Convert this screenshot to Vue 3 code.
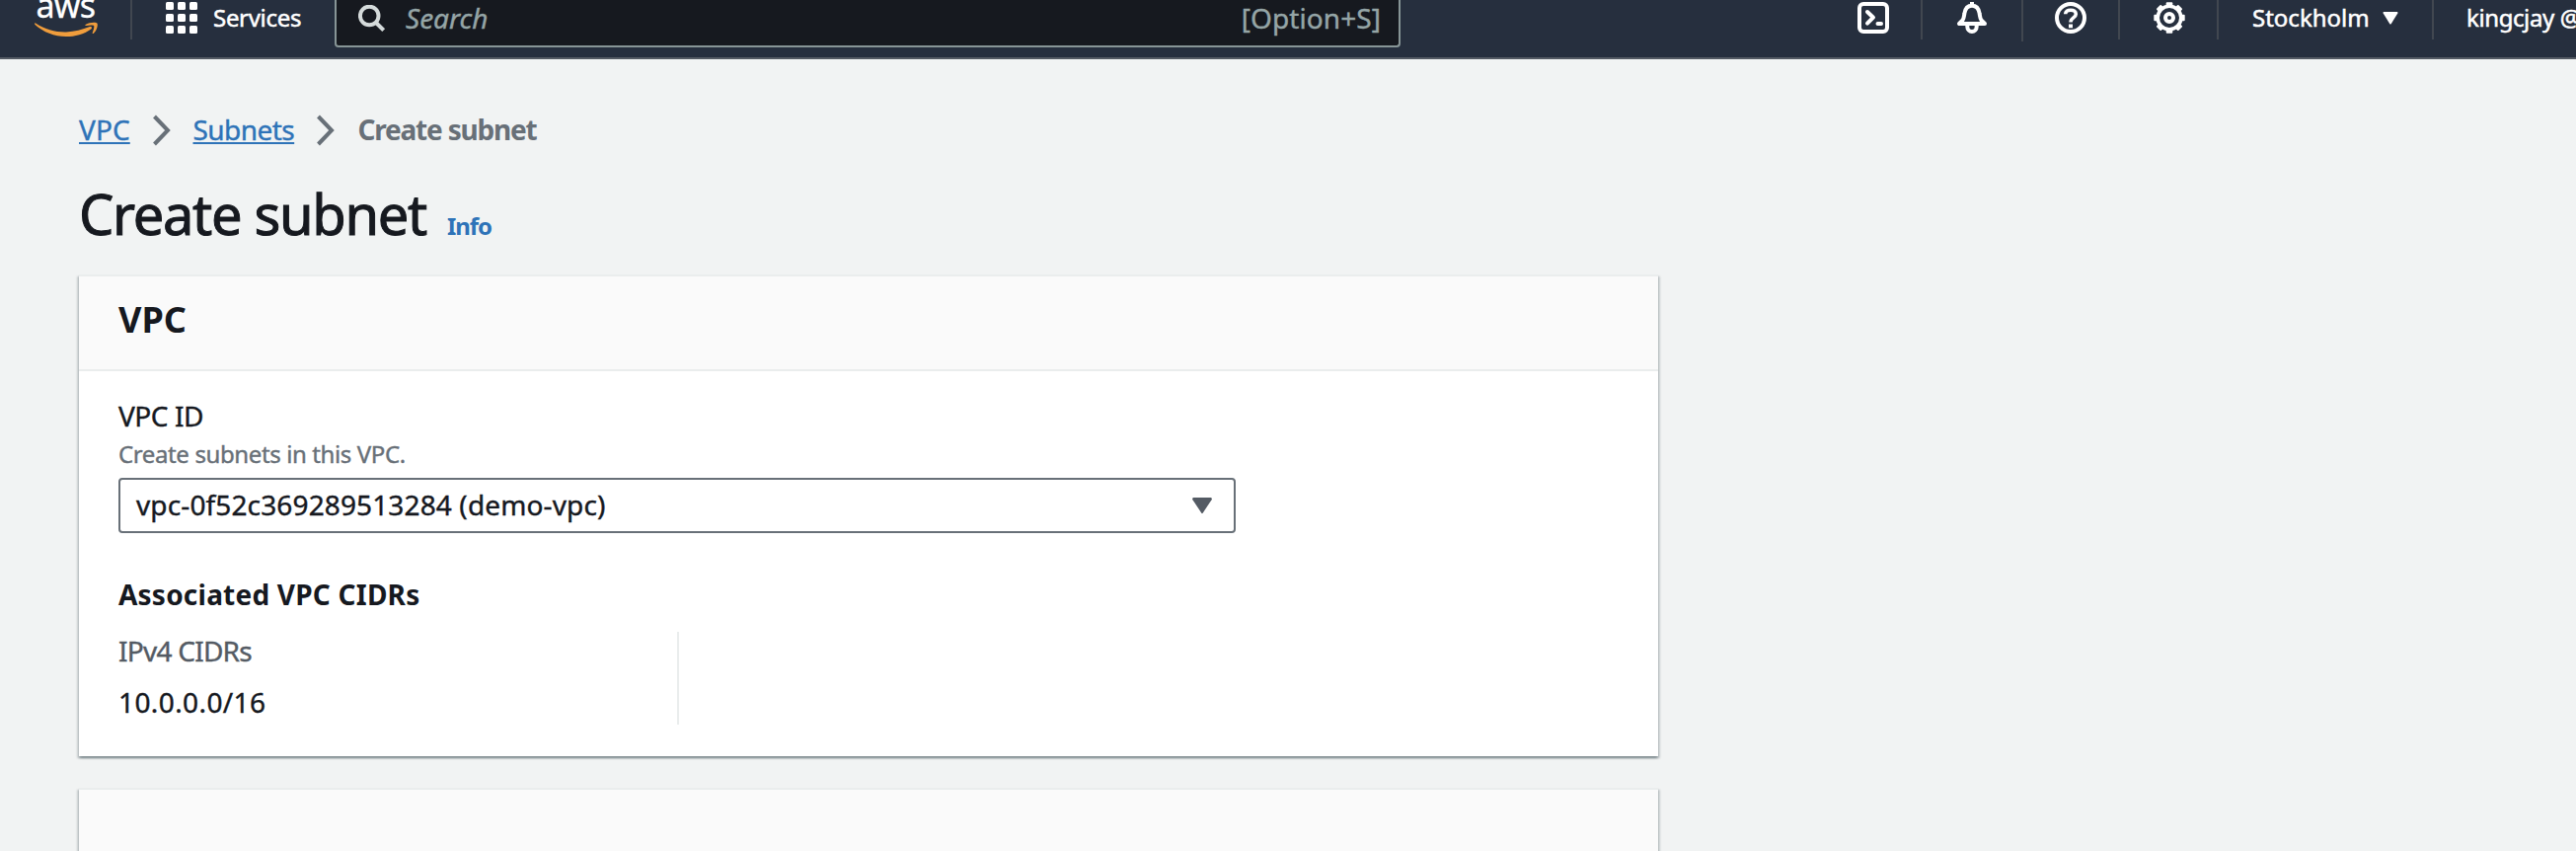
<script setup>
const crumbs = ['VPC', 'Subnets']
const gridCells = [0, 12, 24]
const teeth = [0, 45, 90, 135, 180, 225, 270, 315]
</script>

<template>
  <div class="page">
    <header class="topbar">
      <svg class="logo" width="96" height="40" viewBox="0 0 96 40">
        <text x="36.5" y="18" class="logo-text">aws</text>
        <path fill="#f09d3c" d="M36.1 23.5 C46 30 56 32.6 67 32.4 C76 32.2 83 30 91 27.1 C92.7 26.5 94 28.2 92.3 29.4 C85 34.6 76 37 67 37 C55 37 44 32.6 35.5 25 C34.7 24.1 35.2 23 36.1 23.5 Z" />
        <path fill="#f09d3c" d="M86.6 25.1 C90.5 22.3 97.5 22.2 98.4 23.5 C99.5 25.1 98.1 31 94.9 33.8 C94.2 34.4 93.4 34 93.7 33.2 C94.8 30.5 95.8 27 95.1 26 C94.3 25 90.5 25.4 87.2 25.9 C86.3 26 85.9 25.6 86.6 25.1 Z" />
      </svg>
      <i class="rule rule-logo"></i>
      <div class="services">
        <svg width="32" height="32" viewBox="0 0 32 32" fill="#fff">
          <template v-for="y in gridCells" :key="y">
            <rect v-for="x in gridCells" :key="x" :x="x" :y="y" width="8" height="8" rx="1.5" />
          </template>
        </svg>
        <span class="services-label">Services</span>
      </div>
      <div class="search">
        <svg width="28" height="28" viewBox="0 0 28 28" fill="none" stroke="#d5dbdb" stroke-width="4">
          <circle cx="11.2" cy="11" r="9.3" />
          <path d="M17.5 17.5 L25.7 25.7" />
        </svg>
        <span class="placeholder">Search</span>
        <span class="shortcut">[Option+S]</span>
      </div>
      <nav class="tools">
        <a class="tool tool-shell">
          <svg width="32" height="32" viewBox="0 0 32 32" fill="none" stroke="#fff" stroke-width="4" stroke-linecap="round">
            <rect x="2" y="2" width="28" height="28" rx="4" />
            <path d="M10 10 L16 15.7 L10 21.7" stroke-linejoin="round" />
            <path d="M20.5 22 H24" />
          </svg>
        </a>
        <i class="rule"></i>
        <a class="tool tool-bell">
          <svg width="32" height="32" viewBox="0 0 32 32" fill="none" stroke="#fff" stroke-width="4" stroke-linejoin="round">
            <path d="M16 0 V4" />
            <path d="M3 22 H29 L25.5 18.5 C24 16.5 24.2 14.5 23.6 11.5 C22.8 6.5 20 3.8 16 3.8 C12 3.8 9.2 6.5 8.4 11.5 C7.8 14.5 8 16.5 6.5 18.5 Z" />
            <path d="M11.3 22.5 V25 C11.3 28 13.5 30 16 30 C18.5 30 20.7 28 20.7 25 V22.5" />
          </svg>
        </a>
        <i class="rule rule-tall"></i>
        <a class="tool tool-help">
          <svg width="32" height="32" viewBox="0 0 32 32" fill="none" stroke="#fff" stroke-width="4">
            <circle cx="16" cy="16" r="14" />
            <path stroke-width="3.6" d="M10.7 12.3 C10.7 9.6 12.8 8.2 16 8.2 C19.2 8.2 21.3 9.8 21.3 12.2 C21.3 16.2 16 15.6 16 20.6" />
            <path d="M16 22.5 V26.3" />
          </svg>
        </a>
        <i class="rule"></i>
        <a class="tool tool-gear">
          <svg width="32" height="32" viewBox="0 0 32 32" fill="none" stroke="#fff" stroke-width="4">
            <circle cx="16" cy="16" r="11.8" stroke-width="3.6" />
            <rect v-for="a in teeth" :key="a" x="12.7" y="0.3" width="6.6" height="4" rx="1" fill="#fff" stroke="none" :transform="`rotate(${a} 16 16)`" />
            <circle cx="16" cy="16" r="4" />
          </svg>
        </a>
        <i class="rule"></i>
        <a class="region">
          <span>Stockholm</span>
          <svg width="16" height="13" viewBox="0 0 16 13"><path fill="#fff" d="M1.2 0 H14.8 Q16 0.3 15.3 1.5 L8.8 12 Q8 13 7.2 12 L0.7 1.5 Q0 0.3 1.2 0 Z" /></svg>
        </a>
        <i class="rule"></i>
        <a class="account">kingcjay @</a>
      </nav>
    </header>

    <main class="content">
      <nav class="crumbs">
        <template v-for="c in crumbs" :key="c">
          <a class="crumb" :class="{ short: c === 'VPC' }">{{ c }}</a>
          <svg class="chevron" width="18" height="32" viewBox="0 0 18 32" fill="none" stroke="#687078" stroke-width="4">
            <path d="M1.5 2 L15 16 L1.5 30" />
          </svg>
        </template>
        <span class="crumb-current">Create subnet</span>
      </nav>

      <div class="title">
        <h1>Create subnet</h1>
        <a class="info">Info</a>
      </div>

      <section class="card">
        <div class="card-head"><h2>VPC</h2></div>
        <div class="card-body">
          <div class="label">VPC ID</div>
          <div class="hint">Create subnets in this VPC.</div>
          <div class="select">
            <span>vpc-0f52c369289513284 (demo-vpc)</span>
            <svg width="20" height="16" viewBox="0 0 20 16"><path fill="#545b64" d="M1.2 0 H18.8 Q20.4 0.6 19.6 2.2 L10.8 15.4 Q10 16.4 9.2 15.4 L0.4 2.2 Q-0.4 0.6 1.2 0 Z" /></svg>
          </div>
          <h3>Associated VPC CIDRs</h3>
          <div class="column">
            <div class="key">IPv4 CIDRs</div>
            <div class="value">10.0.0.0/16</div>
          </div>
        </div>
      </section>

      <section class="card card-next">
        <div class="card-head"></div>
      </section>
    </main>
  </div>
</template>

<style>
body {
  background: #f1f3f3;
  overflow: hidden;
}
</style>

<style scoped>
.page {
  width: 2610px;
  height: 862px;
  overflow: hidden;
  background: #f1f3f3;
  color: #16191f;
  font-family: "Noto Sans", "Open Sans", sans-serif;
  font-size: 28px;
  line-height: 40px;
  white-space: nowrap;
}
h1, h2, h3 {
  margin: 0;
}
.topbar {
  display: flex;
  align-items: flex-start;
  height: 58px;
  background: #262f3e;
  border-bottom: 2px solid #545b64;
  color: #fff;
  font-size: 24px;
  line-height: 36px;
  overflow: hidden;
}
.topbar > *,
.tools > * {
  flex: none;
}
.logo {
  overflow: visible;
}
.logo-text {
  font-size: 34px;
  letter-spacing: -0.8px;
  fill: #fff;
  stroke: #fff;
  stroke-width: 0.3px;
}
.rule {
  width: 2px;
  height: 40px;
  background: #414750;
}
.rule-tall {
  height: 42px;
}
.rule-logo {
  margin-left: 36px;
}
.services {
  display: flex;
  align-items: center;
  width: 206px;
  height: 36px;
  padding-left: 34px;
  box-sizing: border-box;
}
.services-label {
  margin-left: 16px;
  letter-spacing: -0.3px;
  -webkit-text-stroke: 0.5px #fff;
}
.search {
  display: flex;
  box-sizing: border-box;
  width: 1080px;
  height: 48px;
  margin-left: -1px;
  padding: 0 18px 0 22px;
  background: #16191f;
  border: 2px solid #879596;
  border-top: 0;
  border-radius: 0 0 4px 4px;
  font-size: 28px;
  color: #95a5a6;
}
.search svg {
  margin-top: 5px;
}
.placeholder {
  margin-left: 20px;
  font-style: italic;
  -webkit-text-stroke: 0.4px #95a5a6;
}
.shortcut {
  margin-left: auto;
  letter-spacing: 0.08px;
  -webkit-text-stroke: 0.4px #95a5a6;
}
.tools {
  display: flex;
  align-items: flex-start;
  margin-left: 463px;
}
.tool {
  display: flex;
  align-items: center;
  box-sizing: border-box;
  height: 36px;
}
.tool-shell {
  width: 64px;
}
.tool-bell {
  width: 100px;
  padding-left: 34px;
}
.tool-help {
  width: 96px;
  padding-left: 32px;
}
.tool-gear {
  width: 98px;
  padding-left: 34px;
}
.region {
  display: flex;
  align-items: center;
  box-sizing: border-box;
  width: 216px;
  padding-left: 34px;
  -webkit-text-stroke: 0.5px #fff;
}
.region svg {
  margin-left: 13px;
}
.account {
  padding-left: 33px;
  letter-spacing: -0.4px;
  -webkit-text-stroke: 0.5px #fff;
}
.content {
  padding: 51px 0 0 80px;
}
.crumbs {
  display: flex;
  align-items: center;
  height: 40px;
}
.crumb {
  width: 102.5px;
  letter-spacing: -0.55px;
  color: #2e73b8;
  text-decoration: underline;
  text-decoration-thickness: 2px;
  text-underline-offset: 2px;
  -webkit-text-stroke: 0.4px #2e73b8;
}
.crumb.short {
  width: 51.5px;
  letter-spacing: 0.1px;
}
.chevron {
  margin: 2px 23px 0;
}
.crumb-current {
  margin-left: 0.5px;
  font-weight: 700;
  letter-spacing: -1.2px;
  color: #687078;
}
.title {
  display: flex;
  align-items: baseline;
  margin-top: 30px;
  height: 70px;
  line-height: 70px;
}
h1 {
  font-size: 56px;
  font-weight: 400;
  letter-spacing: -1.32px;
  -webkit-text-stroke: 1px #16191f;
}
.info {
  margin-left: 21px;
  font-size: 24px;
  font-weight: 700;
  letter-spacing: -1px;
  color: #2e73b8;
}
.card {
  width: 1600px;
  margin-top: 27px;
  background: #fff;
  border-top: 2px solid #eaeded;
  box-shadow: 0 2px 2px rgba(0, 28, 36, 0.3), 2px 2px 2px rgba(0, 28, 36, 0.15), -2px 2px 2px rgba(0, 28, 36, 0.15);
}
.card-next {
  height: 300px;
  margin-top: 32px;
}
.card-head {
  box-sizing: border-box;
  height: 96px;
  padding: 21px 40px 0;
  background: #fafafa;
  border-bottom: 2px solid #eaeded;
}
h2 {
  font-size: 36px;
  line-height: 45px;
}
.card-body {
  padding: 25px 40px 32px;
}
.label {
  letter-spacing: -0.45px;
  -webkit-text-stroke: 0.4px #16191f;
}
.hint {
  margin-top: 1px;
  font-size: 24px;
  line-height: 36px;
  letter-spacing: -0.38px;
  color: #687078;
  -webkit-text-stroke: 0.4px #687078;
}
.select {
  display: flex;
  align-items: center;
  justify-content: space-between;
  box-sizing: border-box;
  width: 1132px;
  height: 56px;
  margin-top: 6px;
  padding: 0 22px 0 16px;
  border: 2px solid #687078;
  border-radius: 4px;
  letter-spacing: 0.13px;
  -webkit-text-stroke: 0.4px #16191f;
}
.select span {
  padding-bottom: 2px;
}
h3 {
  margin-top: 42px;
  font-size: 28px;
  letter-spacing: 0.22px;
}
.column {
  box-sizing: border-box;
  width: 568px;
  height: 94px;
  margin-top: 18px;
  border-right: 2px solid #eaeded;
}
.key {
  line-height: 38px;
  letter-spacing: -0.75px;
  color: #545b64;
  -webkit-text-stroke: 0.4px #545b64;
}
.value {
  margin-top: 13px;
  letter-spacing: 0.4px;
  -webkit-text-stroke: 0.4px #16191f;
}
</style>
